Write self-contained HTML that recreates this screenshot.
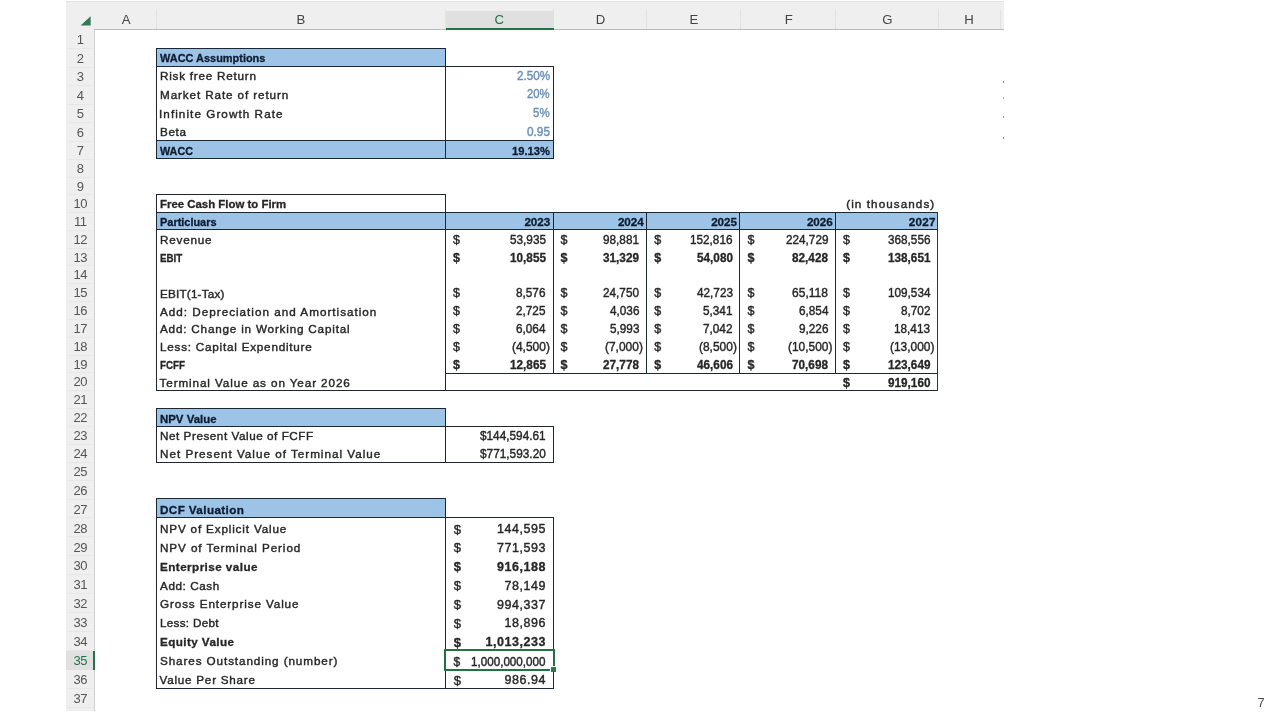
<!DOCTYPE html>
<html lang="en"><head><meta charset="utf-8"><title>DCF Valuation</title>
<style>
html,body{margin:0;padding:0;background:#fff}
body{width:1280px;height:720px;position:relative;overflow:hidden;font-family:"Liberation Sans",Arial,sans-serif}
.b{position:absolute}
.t{position:absolute;white-space:nowrap;line-height:1;color:#262626;transform-origin:0 0;-webkit-text-stroke:0.4px}
.n{-webkit-text-stroke:0}
#w{position:absolute;left:0;top:0;width:1280px;height:720px;will-change:transform}
.h{position:absolute;width:20px;text-align:center;font-size:13.2px;line-height:1;white-space:nowrap}
</style></head><body>
<div id="w">
<div class="b" style="left:66.00px;top:1.50px;width:938.00px;height:28.00px;background:#efefef;"></div>
<div class="b" style="left:66.00px;top:1.00px;width:938.00px;height:1.00px;background:#e2e2e2;"></div>
<div class="b" style="left:66.00px;top:29.50px;width:28.50px;height:681.50px;background:#efefef;"></div>
<div class="b" style="left:93.50px;top:30.00px;width:1.00px;height:681.00px;background:#d2d2d2;"></div>
<div class="b" style="left:94.00px;top:28.80px;width:910.00px;height:1.40px;background:#bdbdbd;"></div>
<div class="b" style="left:155.50px;top:9.00px;width:1.00px;height:20.00px;background:#e2e2e2;"></div>
<div class="b" style="left:445.00px;top:9.00px;width:1.00px;height:20.00px;background:#e2e2e2;"></div>
<div class="b" style="left:553.00px;top:9.00px;width:1.00px;height:20.00px;background:#e2e2e2;"></div>
<div class="b" style="left:646.00px;top:9.00px;width:1.00px;height:20.00px;background:#e2e2e2;"></div>
<div class="b" style="left:739.50px;top:9.00px;width:1.00px;height:20.00px;background:#e2e2e2;"></div>
<div class="b" style="left:834.80px;top:9.00px;width:1.00px;height:20.00px;background:#e2e2e2;"></div>
<div class="b" style="left:937.50px;top:9.00px;width:1.00px;height:20.00px;background:#e2e2e2;"></div>
<div class="b" style="left:1000.00px;top:9.00px;width:1.00px;height:20.00px;background:#e2e2e2;"></div>
<div class="b" style="left:67.00px;top:48.00px;width:26.50px;height:1.00px;background:#e7e7e7;"></div>
<div class="b" style="left:67.00px;top:66.50px;width:26.50px;height:1.00px;background:#e7e7e7;"></div>
<div class="b" style="left:67.00px;top:85.00px;width:26.50px;height:1.00px;background:#e7e7e7;"></div>
<div class="b" style="left:67.00px;top:103.50px;width:26.50px;height:1.00px;background:#e7e7e7;"></div>
<div class="b" style="left:67.00px;top:122.00px;width:26.50px;height:1.00px;background:#e7e7e7;"></div>
<div class="b" style="left:67.00px;top:140.50px;width:26.50px;height:1.00px;background:#e7e7e7;"></div>
<div class="b" style="left:67.00px;top:159.00px;width:26.50px;height:1.00px;background:#e7e7e7;"></div>
<div class="b" style="left:67.00px;top:176.50px;width:26.50px;height:1.00px;background:#e7e7e7;"></div>
<div class="b" style="left:67.00px;top:194.00px;width:26.50px;height:1.00px;background:#e7e7e7;"></div>
<div class="b" style="left:67.00px;top:211.80px;width:26.50px;height:1.00px;background:#e7e7e7;"></div>
<div class="b" style="left:67.00px;top:229.60px;width:26.50px;height:1.00px;background:#e7e7e7;"></div>
<div class="b" style="left:67.00px;top:247.50px;width:26.50px;height:1.00px;background:#e7e7e7;"></div>
<div class="b" style="left:67.00px;top:265.30px;width:26.50px;height:1.00px;background:#e7e7e7;"></div>
<div class="b" style="left:67.00px;top:283.10px;width:26.50px;height:1.00px;background:#e7e7e7;"></div>
<div class="b" style="left:67.00px;top:301.00px;width:26.50px;height:1.00px;background:#e7e7e7;"></div>
<div class="b" style="left:67.00px;top:318.80px;width:26.50px;height:1.00px;background:#e7e7e7;"></div>
<div class="b" style="left:67.00px;top:336.60px;width:26.50px;height:1.00px;background:#e7e7e7;"></div>
<div class="b" style="left:67.00px;top:354.50px;width:26.50px;height:1.00px;background:#e7e7e7;"></div>
<div class="b" style="left:67.00px;top:372.30px;width:26.50px;height:1.00px;background:#e7e7e7;"></div>
<div class="b" style="left:67.00px;top:390.10px;width:26.50px;height:1.00px;background:#e7e7e7;"></div>
<div class="b" style="left:67.00px;top:408.00px;width:26.50px;height:1.00px;background:#e7e7e7;"></div>
<div class="b" style="left:67.00px;top:425.80px;width:26.50px;height:1.00px;background:#e7e7e7;"></div>
<div class="b" style="left:67.00px;top:443.60px;width:26.50px;height:1.00px;background:#e7e7e7;"></div>
<div class="b" style="left:67.00px;top:461.50px;width:26.50px;height:1.00px;background:#e7e7e7;"></div>
<div class="b" style="left:67.00px;top:479.50px;width:26.50px;height:1.00px;background:#e7e7e7;"></div>
<div class="b" style="left:67.00px;top:498.50px;width:26.50px;height:1.00px;background:#e7e7e7;"></div>
<div class="b" style="left:67.00px;top:517.40px;width:26.50px;height:1.00px;background:#e7e7e7;"></div>
<div class="b" style="left:67.00px;top:536.30px;width:26.50px;height:1.00px;background:#e7e7e7;"></div>
<div class="b" style="left:67.00px;top:555.20px;width:26.50px;height:1.00px;background:#e7e7e7;"></div>
<div class="b" style="left:67.00px;top:574.10px;width:26.50px;height:1.00px;background:#e7e7e7;"></div>
<div class="b" style="left:67.00px;top:593.00px;width:26.50px;height:1.00px;background:#e7e7e7;"></div>
<div class="b" style="left:67.00px;top:611.90px;width:26.50px;height:1.00px;background:#e7e7e7;"></div>
<div class="b" style="left:67.00px;top:630.80px;width:26.50px;height:1.00px;background:#e7e7e7;"></div>
<div class="b" style="left:67.00px;top:649.70px;width:26.50px;height:1.00px;background:#e7e7e7;"></div>
<div class="b" style="left:67.00px;top:668.60px;width:26.50px;height:1.00px;background:#e7e7e7;"></div>
<div class="b" style="left:67.00px;top:687.50px;width:26.50px;height:1.00px;background:#e7e7e7;"></div>
<div class="b" style="left:67.00px;top:706.50px;width:26.50px;height:1.00px;background:#e7e7e7;"></div>
<div class="b" style="left:445.50px;top:11.00px;width:108.00px;height:18.50px;background:#e0e0e0;"></div>
<div class="b" style="left:445.50px;top:27.60px;width:108.00px;height:2.20px;background:#217346;"></div>
<div class="b" style="left:66.00px;top:650.60px;width:28.50px;height:19.20px;background:#e0e0e0;"></div>
<div class="b" style="left:92.70px;top:650.60px;width:2.10px;height:19.20px;background:#217346;"></div>
<svg class="b" style="left:80px;top:15px" width="12" height="12" viewBox="0 0 12 12"><path d="M10.6 1.2V10.6H0.6Z" fill="#2f7d50"/></svg>
<div class="b" style="left:157.00px;top:48.50px;width:288.60px;height:18.50px;background:#9dc3e6;"></div>
<div class="b" style="left:157.00px;top:141.00px;width:396.50px;height:17.70px;background:#9dc3e6;"></div>
<div class="b" style="left:155.70px;top:47.70px;width:290.60px;height:1.60px;background:#1d2733;"></div>
<div class="b" style="left:155.70px;top:65.70px;width:398.60px;height:1.60px;background:#1d2733;"></div>
<div class="b" style="left:155.70px;top:139.70px;width:398.60px;height:1.60px;background:#1d2733;"></div>
<div class="b" style="left:155.70px;top:157.70px;width:398.60px;height:1.60px;background:#1d2733;"></div>
<div class="b" style="left:155.70px;top:47.70px;width:1.60px;height:111.60px;background:#1d2733;"></div>
<div class="b" style="left:444.70px;top:47.70px;width:1.60px;height:111.60px;background:#1d2733;"></div>
<div class="b" style="left:552.70px;top:65.70px;width:1.60px;height:93.60px;background:#1d2733;"></div>
<div class="b" style="left:157.00px;top:212.30px;width:780.60px;height:17.80px;background:#9dc3e6;"></div>
<div class="b" style="left:155.70px;top:193.70px;width:290.60px;height:1.60px;background:#1d2733;"></div>
<div class="b" style="left:155.70px;top:211.70px;width:782.60px;height:1.60px;background:#1d2733;"></div>
<div class="b" style="left:155.70px;top:228.70px;width:782.60px;height:1.60px;background:#1d2733;"></div>
<div class="b" style="left:444.90px;top:372.90px;width:493.20px;height:1.20px;background:#1d2733;"></div>
<div class="b" style="left:155.70px;top:389.70px;width:782.60px;height:1.60px;background:#1d2733;"></div>
<div class="b" style="left:155.70px;top:193.70px;width:1.60px;height:197.60px;background:#1d2733;"></div>
<div class="b" style="left:444.70px;top:193.70px;width:1.60px;height:197.60px;background:#1d2733;"></div>
<div class="b" style="left:552.70px;top:211.70px;width:1.60px;height:161.60px;background:#1d2733;"></div>
<div class="b" style="left:645.70px;top:211.70px;width:1.60px;height:161.60px;background:#1d2733;"></div>
<div class="b" style="left:738.70px;top:211.70px;width:1.60px;height:161.60px;background:#1d2733;"></div>
<div class="b" style="left:834.70px;top:211.70px;width:1.60px;height:161.60px;background:#1d2733;"></div>
<div class="b" style="left:936.75px;top:211.75px;width:1.50px;height:179.50px;background:#22354d;"></div>
<div class="b" style="left:157.00px;top:408.50px;width:288.60px;height:17.80px;background:#9dc3e6;"></div>
<div class="b" style="left:155.70px;top:407.70px;width:290.60px;height:1.60px;background:#1d2733;"></div>
<div class="b" style="left:155.70px;top:425.70px;width:398.60px;height:1.60px;background:#1d2733;"></div>
<div class="b" style="left:155.70px;top:461.70px;width:398.60px;height:1.60px;background:#1d2733;"></div>
<div class="b" style="left:155.70px;top:407.70px;width:1.60px;height:55.60px;background:#1d2733;"></div>
<div class="b" style="left:444.70px;top:407.70px;width:1.60px;height:55.60px;background:#1d2733;"></div>
<div class="b" style="left:552.90px;top:425.90px;width:1.20px;height:37.20px;background:#1d2733;"></div>
<div class="b" style="left:157.00px;top:499.00px;width:288.60px;height:18.90px;background:#9dc3e6;"></div>
<div class="b" style="left:155.70px;top:497.70px;width:290.60px;height:1.60px;background:#1d2733;"></div>
<div class="b" style="left:155.70px;top:516.70px;width:398.60px;height:1.60px;background:#1d2733;"></div>
<div class="b" style="left:155.70px;top:687.70px;width:398.60px;height:1.60px;background:#1d2733;"></div>
<div class="b" style="left:155.70px;top:497.70px;width:1.60px;height:191.60px;background:#1d2733;"></div>
<div class="b" style="left:444.70px;top:497.70px;width:1.60px;height:191.60px;background:#1d2733;"></div>
<div class="b" style="left:552.90px;top:516.90px;width:1.20px;height:172.20px;background:#1d2733;"></div>
<div class="b" style="left:444.30px;top:649.30px;width:110.40px;height:21.70px;background:#fff;"></div>
<div class="b" style="left:444.30px;top:649.30px;width:110.40px;height:1.80px;background:#217346;"></div>
<div class="b" style="left:444.30px;top:669.20px;width:110.40px;height:1.80px;background:#217346;"></div>
<div class="b" style="left:444.30px;top:649.30px;width:1.80px;height:21.70px;background:#217346;"></div>
<div class="b" style="left:552.90px;top:649.30px;width:1.80px;height:21.70px;background:#217346;"></div>
<div class="b" style="left:550.40px;top:666.20px;width:5.60px;height:5.80px;background:#fff;"></div>
<div class="b" style="left:551.40px;top:667.20px;width:4.60px;height:4.80px;background:#2a7a4c;"></div>
<div class="b" style="left:1002.80px;top:81.40px;width:1.00px;height:1.30px;background:#8a8a8a;"></div>
<div class="b" style="left:1002.80px;top:97.40px;width:1.00px;height:1.30px;background:#c2b65a;"></div>
<div class="b" style="left:1002.80px;top:116.40px;width:1.00px;height:1.30px;background:#999;"></div>
<div class="b" style="left:1002.80px;top:137.40px;width:1.00px;height:1.30px;background:#8a8a8a;"></div>
<span class="h" style="left:116.20px;top:13.43px;color:#444">A</span>
<span class="h" style="left:290.80px;top:13.43px;color:#444">B</span>
<span class="h" style="left:489.30px;top:13.43px;color:#217346">C</span>
<span class="h" style="left:590.60px;top:13.43px;color:#444">D</span>
<span class="h" style="left:684.00px;top:13.43px;color:#444">E</span>
<span class="h" style="left:778.70px;top:13.43px;color:#444">F</span>
<span class="h" style="left:877.50px;top:13.43px;color:#444">G</span>
<span class="h" style="left:959.00px;top:13.43px;color:#444">H</span>
<span class="h" style="left:70.40px;top:33.00px;font-size:13px;color:#555">1</span>
<span class="h" style="left:70.40px;top:51.50px;font-size:13px;color:#555">2</span>
<span class="h" style="left:70.40px;top:70.00px;font-size:13px;color:#555">3</span>
<span class="h" style="left:70.40px;top:88.50px;font-size:13px;color:#555">4</span>
<span class="h" style="left:70.40px;top:107.00px;font-size:13px;color:#555">5</span>
<span class="h" style="left:70.40px;top:125.50px;font-size:13px;color:#555">6</span>
<span class="h" style="left:70.40px;top:144.00px;font-size:13px;color:#555">7</span>
<span class="h" style="left:70.40px;top:162.00px;font-size:13px;color:#555">8</span>
<span class="h" style="left:70.40px;top:179.50px;font-size:13px;color:#555">9</span>
<span class="h" style="left:70.30px;top:197.15px;font-size:13px;letter-spacing:-0.5px;color:#555">10</span>
<span class="h" style="left:70.30px;top:214.95px;font-size:13px;letter-spacing:-0.5px;color:#555">11</span>
<span class="h" style="left:70.30px;top:232.80px;font-size:13px;letter-spacing:-0.5px;color:#555">12</span>
<span class="h" style="left:70.30px;top:250.65px;font-size:13px;letter-spacing:-0.5px;color:#555">13</span>
<span class="h" style="left:70.30px;top:268.45px;font-size:13px;letter-spacing:-0.5px;color:#555">14</span>
<span class="h" style="left:70.30px;top:286.30px;font-size:13px;letter-spacing:-0.5px;color:#555">15</span>
<span class="h" style="left:70.30px;top:304.15px;font-size:13px;letter-spacing:-0.5px;color:#555">16</span>
<span class="h" style="left:70.30px;top:321.95px;font-size:13px;letter-spacing:-0.5px;color:#555">17</span>
<span class="h" style="left:70.30px;top:339.80px;font-size:13px;letter-spacing:-0.5px;color:#555">18</span>
<span class="h" style="left:70.30px;top:357.65px;font-size:13px;letter-spacing:-0.5px;color:#555">19</span>
<span class="h" style="left:70.30px;top:375.45px;font-size:13px;letter-spacing:-0.5px;color:#555">20</span>
<span class="h" style="left:70.30px;top:393.30px;font-size:13px;letter-spacing:-0.5px;color:#555">21</span>
<span class="h" style="left:70.30px;top:411.15px;font-size:13px;letter-spacing:-0.5px;color:#555">22</span>
<span class="h" style="left:70.30px;top:428.95px;font-size:13px;letter-spacing:-0.5px;color:#555">23</span>
<span class="h" style="left:70.30px;top:446.80px;font-size:13px;letter-spacing:-0.5px;color:#555">24</span>
<span class="h" style="left:70.30px;top:464.75px;font-size:13px;letter-spacing:-0.5px;color:#555">25</span>
<span class="h" style="left:70.30px;top:483.75px;font-size:13px;letter-spacing:-0.5px;color:#555">26</span>
<span class="h" style="left:70.30px;top:502.70px;font-size:13px;letter-spacing:-0.5px;color:#555">27</span>
<span class="h" style="left:70.30px;top:521.60px;font-size:13px;letter-spacing:-0.5px;color:#555">28</span>
<span class="h" style="left:70.30px;top:540.50px;font-size:13px;letter-spacing:-0.5px;color:#555">29</span>
<span class="h" style="left:70.30px;top:559.40px;font-size:13px;letter-spacing:-0.5px;color:#555">30</span>
<span class="h" style="left:70.30px;top:578.30px;font-size:13px;letter-spacing:-0.5px;color:#555">31</span>
<span class="h" style="left:70.30px;top:597.20px;font-size:13px;letter-spacing:-0.5px;color:#555">32</span>
<span class="h" style="left:70.30px;top:616.10px;font-size:13px;letter-spacing:-0.5px;color:#555">33</span>
<span class="h" style="left:70.30px;top:635.00px;font-size:13px;letter-spacing:-0.5px;color:#555">34</span>
<span class="h" style="left:70.30px;top:654.30px;font-size:13px;letter-spacing:-0.5px;color:#217346">35</span>
<span class="h" style="left:70.30px;top:673.20px;font-size:13px;letter-spacing:-0.5px;color:#555">36</span>
<span class="h" style="left:70.30px;top:692.15px;font-size:13px;letter-spacing:-0.5px;color:#555">37</span>
<span class="t" style="left:159.50px;top:52.40px;font-size:11.7px;transform:scaleX(0.9363);font-weight:bold;-webkit-text-stroke:0.3px;color:#0e1b30;">WACC Assumptions</span>
<span class="t" style="left:160.00px;top:70.20px;font-size:11.7px;letter-spacing:0.771px;">Risk free Return</span>
<span class="t" style="left:160.00px;top:89.10px;font-size:11.7px;letter-spacing:0.891px;">Market Rate of return</span>
<span class="t" style="left:159.00px;top:107.80px;font-size:11.7px;letter-spacing:1.064px;">Infinite Growth Rate</span>
<span class="t" style="left:160.00px;top:126.30px;font-size:11.7px;letter-spacing:0.652px;">Beta</span>
<span class="t" style="left:159.50px;top:144.60px;font-size:11.7px;transform:scaleX(0.9237);font-weight:bold;-webkit-text-stroke:0.3px;color:#0e1b30;">WACC</span>
<span class="t" style="left:160.00px;top:198.30px;font-size:11.7px;transform:scaleX(0.9760);font-weight:bold;-webkit-text-stroke:0.3px;">Free Cash Flow to Firm</span>
<span class="t" style="left:160.00px;top:216.40px;font-size:11.7px;transform:scaleX(0.9357);font-weight:bold;-webkit-text-stroke:0.3px;color:#0e1b30;">Particluars</span>
<span class="t" style="left:160.00px;top:234.20px;font-size:11.7px;letter-spacing:0.786px;">Revenue</span>
<span class="t" style="left:160.00px;top:252.10px;font-size:11.7px;transform:scaleX(0.8369);font-weight:bold;-webkit-text-stroke:0.3px;">EBIT</span>
<span class="t" style="left:160.00px;top:287.70px;font-size:11.7px;letter-spacing:0.205px;">EBIT(1-Tax)</span>
<span class="t" style="left:160.00px;top:305.60px;font-size:11.7px;letter-spacing:1.004px;">Add: Depreciation and Amortisation</span>
<span class="t" style="left:160.00px;top:323.40px;font-size:11.7px;letter-spacing:0.810px;">Add: Change in Working Capital</span>
<span class="t" style="left:160.00px;top:341.20px;font-size:11.7px;letter-spacing:0.774px;">Less: Capital Expenditure</span>
<span class="t" style="left:160.00px;top:359.10px;font-size:11.7px;transform:scaleX(0.8412);font-weight:bold;-webkit-text-stroke:0.3px;">FCFF</span>
<span class="t" style="left:159.50px;top:376.90px;font-size:11.7px;letter-spacing:0.901px;">Terminal Value as on Year 2026</span>
<span class="t" style="left:160.00px;top:412.60px;font-size:11.7px;transform:scaleX(0.9775);font-weight:bold;-webkit-text-stroke:0.3px;color:#0e1b30;">NPV Value</span>
<span class="t" style="left:160.00px;top:430.40px;font-size:11.7px;letter-spacing:0.544px;">Net Present Value of FCFF</span>
<span class="t" style="left:160.00px;top:448.20px;font-size:11.7px;letter-spacing:0.995px;">Net Present Value of Terminal Value</span>
<span class="t" style="left:160.00px;top:503.90px;font-size:11.7px;letter-spacing:0.389px;font-weight:bold;-webkit-text-stroke:0.3px;color:#0e1b30;">DCF Valuation</span>
<span class="t" style="left:160.00px;top:522.80px;font-size:11.7px;letter-spacing:0.834px;">NPV of Explicit Value</span>
<span class="t" style="left:160.00px;top:541.70px;font-size:11.7px;letter-spacing:0.906px;">NPV of Terminal Period</span>
<span class="t" style="left:160.00px;top:560.60px;font-size:11.7px;letter-spacing:0.437px;font-weight:bold;-webkit-text-stroke:0.3px;">Enterprise value</span>
<span class="t" style="left:160.00px;top:579.50px;font-size:11.7px;letter-spacing:0.585px;">Add: Cash</span>
<span class="t" style="left:160.00px;top:598.40px;font-size:11.7px;letter-spacing:0.883px;">Gross Enterprise Value</span>
<span class="t" style="left:160.00px;top:617.30px;font-size:11.7px;letter-spacing:0.292px;">Less: Debt</span>
<span class="t" style="left:160.00px;top:636.20px;font-size:11.7px;letter-spacing:0.409px;font-weight:bold;-webkit-text-stroke:0.3px;">Equity Value</span>
<span class="t" style="left:160.00px;top:655.10px;font-size:11.7px;letter-spacing:0.901px;">Shares Outstanding (number)</span>
<span class="t" style="left:159.50px;top:674.00px;font-size:11.7px;letter-spacing:0.758px;">Value Per Share</span>
<span class="t" style="left:516.50px;top:69.52px;font-size:12.5px;transform:scaleX(0.9341);color:#6a8fb5;">2.50%</span>
<span class="t" style="left:527.00px;top:88.42px;font-size:12.5px;transform:scaleX(0.9035);color:#6a8fb5;">20%</span>
<span class="t" style="left:533.00px;top:107.12px;font-size:12.5px;transform:scaleX(0.9191);color:#6a8fb5;">5%</span>
<span class="t" style="left:526.50px;top:125.62px;font-size:12.5px;transform:scaleX(0.9435);color:#6a8fb5;">0.95</span>
<span class="t" style="left:511.50px;top:144.60px;font-size:11.7px;transform:scaleX(0.9566);font-weight:bold;-webkit-text-stroke:0.3px;color:#0e1b30;">19.13%</span>
<span class="t" style="left:524.45px;top:216.40px;font-size:11.7px;letter-spacing:-0.067px;font-weight:bold;-webkit-text-stroke:0.3px;color:#0e1b30;">2023</span>
<span class="t" style="left:509.75px;top:233.92px;font-size:12.5px;transform:scaleX(0.9404);">53,935</span>
<span class="t" style="left:453.00px;top:233.92px;font-size:12.5px;">$</span>
<span class="t" style="left:509.75px;top:251.82px;font-size:12.5px;transform:scaleX(0.9404);font-weight:bold;-webkit-text-stroke:0.3px;">10,855</span>
<span class="t" style="left:453.00px;top:251.82px;font-size:12.5px;font-weight:bold;-webkit-text-stroke:0.3px;">$</span>
<span class="t" style="left:516.25px;top:287.42px;font-size:12.5px;transform:scaleX(0.9416);">8,576</span>
<span class="t" style="left:453.00px;top:287.42px;font-size:12.5px;">$</span>
<span class="t" style="left:516.25px;top:305.32px;font-size:12.5px;transform:scaleX(0.9416);">2,725</span>
<span class="t" style="left:453.00px;top:305.32px;font-size:12.5px;">$</span>
<span class="t" style="left:516.25px;top:323.12px;font-size:12.5px;transform:scaleX(0.9416);">6,064</span>
<span class="t" style="left:453.00px;top:323.12px;font-size:12.5px;">$</span>
<span class="t" style="left:511.95px;top:340.92px;font-size:12.5px;transform:scaleX(0.9558);">(4,500)</span>
<span class="t" style="left:453.00px;top:340.92px;font-size:12.5px;">$</span>
<span class="t" style="left:509.75px;top:358.82px;font-size:12.5px;transform:scaleX(0.9404);font-weight:bold;-webkit-text-stroke:0.3px;">12,865</span>
<span class="t" style="left:453.00px;top:358.82px;font-size:12.5px;font-weight:bold;-webkit-text-stroke:0.3px;">$</span>
<span class="t" style="left:617.95px;top:216.40px;font-size:11.7px;letter-spacing:-0.067px;font-weight:bold;-webkit-text-stroke:0.3px;color:#0e1b30;">2024</span>
<span class="t" style="left:603.25px;top:233.92px;font-size:12.5px;transform:scaleX(0.9404);">98,881</span>
<span class="t" style="left:560.50px;top:233.92px;font-size:12.5px;">$</span>
<span class="t" style="left:603.25px;top:251.82px;font-size:12.5px;transform:scaleX(0.9404);font-weight:bold;-webkit-text-stroke:0.3px;">31,329</span>
<span class="t" style="left:560.50px;top:251.82px;font-size:12.5px;font-weight:bold;-webkit-text-stroke:0.3px;">$</span>
<span class="t" style="left:603.25px;top:287.42px;font-size:12.5px;transform:scaleX(0.9404);">24,750</span>
<span class="t" style="left:560.50px;top:287.42px;font-size:12.5px;">$</span>
<span class="t" style="left:609.75px;top:305.32px;font-size:12.5px;transform:scaleX(0.9416);">4,036</span>
<span class="t" style="left:560.50px;top:305.32px;font-size:12.5px;">$</span>
<span class="t" style="left:609.75px;top:323.12px;font-size:12.5px;transform:scaleX(0.9416);">5,993</span>
<span class="t" style="left:560.50px;top:323.12px;font-size:12.5px;">$</span>
<span class="t" style="left:605.45px;top:340.92px;font-size:12.5px;transform:scaleX(0.9558);">(7,000)</span>
<span class="t" style="left:560.50px;top:340.92px;font-size:12.5px;">$</span>
<span class="t" style="left:603.25px;top:358.82px;font-size:12.5px;transform:scaleX(0.9404);font-weight:bold;-webkit-text-stroke:0.3px;">27,778</span>
<span class="t" style="left:560.50px;top:358.82px;font-size:12.5px;font-weight:bold;-webkit-text-stroke:0.3px;">$</span>
<span class="t" style="left:711.20px;top:216.40px;font-size:11.7px;letter-spacing:-0.067px;font-weight:bold;-webkit-text-stroke:0.3px;color:#0e1b30;">2025</span>
<span class="t" style="left:690.00px;top:233.92px;font-size:12.5px;transform:scaleX(0.9396);">152,816</span>
<span class="t" style="left:654.25px;top:233.92px;font-size:12.5px;">$</span>
<span class="t" style="left:696.50px;top:251.82px;font-size:12.5px;transform:scaleX(0.9404);font-weight:bold;-webkit-text-stroke:0.3px;">54,080</span>
<span class="t" style="left:654.25px;top:251.82px;font-size:12.5px;font-weight:bold;-webkit-text-stroke:0.3px;">$</span>
<span class="t" style="left:696.50px;top:287.42px;font-size:12.5px;transform:scaleX(0.9404);">42,723</span>
<span class="t" style="left:654.25px;top:287.42px;font-size:12.5px;">$</span>
<span class="t" style="left:703.00px;top:305.32px;font-size:12.5px;transform:scaleX(0.9416);">5,341</span>
<span class="t" style="left:654.25px;top:305.32px;font-size:12.5px;">$</span>
<span class="t" style="left:703.00px;top:323.12px;font-size:12.5px;transform:scaleX(0.9416);">7,042</span>
<span class="t" style="left:654.25px;top:323.12px;font-size:12.5px;">$</span>
<span class="t" style="left:698.70px;top:340.92px;font-size:12.5px;transform:scaleX(0.9558);">(8,500)</span>
<span class="t" style="left:654.25px;top:340.92px;font-size:12.5px;">$</span>
<span class="t" style="left:696.50px;top:358.82px;font-size:12.5px;transform:scaleX(0.9404);font-weight:bold;-webkit-text-stroke:0.3px;">46,606</span>
<span class="t" style="left:654.25px;top:358.82px;font-size:12.5px;font-weight:bold;-webkit-text-stroke:0.3px;">$</span>
<span class="t" style="left:806.95px;top:216.40px;font-size:11.7px;letter-spacing:-0.067px;font-weight:bold;-webkit-text-stroke:0.3px;color:#0e1b30;">2026</span>
<span class="t" style="left:785.75px;top:233.92px;font-size:12.5px;transform:scaleX(0.9396);">224,729</span>
<span class="t" style="left:747.50px;top:233.92px;font-size:12.5px;">$</span>
<span class="t" style="left:792.25px;top:251.82px;font-size:12.5px;transform:scaleX(0.9404);font-weight:bold;-webkit-text-stroke:0.3px;">82,428</span>
<span class="t" style="left:747.50px;top:251.82px;font-size:12.5px;font-weight:bold;-webkit-text-stroke:0.3px;">$</span>
<span class="t" style="left:792.25px;top:287.42px;font-size:12.5px;transform:scaleX(0.9638);">65,118</span>
<span class="t" style="left:747.50px;top:287.42px;font-size:12.5px;">$</span>
<span class="t" style="left:798.75px;top:305.32px;font-size:12.5px;transform:scaleX(0.9416);">6,854</span>
<span class="t" style="left:747.50px;top:305.32px;font-size:12.5px;">$</span>
<span class="t" style="left:798.75px;top:323.12px;font-size:12.5px;transform:scaleX(0.9416);">9,226</span>
<span class="t" style="left:747.50px;top:323.12px;font-size:12.5px;">$</span>
<span class="t" style="left:787.95px;top:340.92px;font-size:12.5px;transform:scaleX(0.9527);">(10,500)</span>
<span class="t" style="left:747.50px;top:340.92px;font-size:12.5px;">$</span>
<span class="t" style="left:792.25px;top:358.82px;font-size:12.5px;transform:scaleX(0.9404);font-weight:bold;-webkit-text-stroke:0.3px;">70,698</span>
<span class="t" style="left:747.50px;top:358.82px;font-size:12.5px;font-weight:bold;-webkit-text-stroke:0.3px;">$</span>
<span class="t" style="left:908.70px;top:216.40px;font-size:11.7px;letter-spacing:0.267px;font-weight:bold;-webkit-text-stroke:0.3px;color:#0e1b30;">2027</span>
<span class="t" style="left:887.50px;top:233.92px;font-size:12.5px;transform:scaleX(0.9396);">368,556</span>
<span class="t" style="left:843.00px;top:233.92px;font-size:12.5px;">$</span>
<span class="t" style="left:887.50px;top:251.82px;font-size:12.5px;transform:scaleX(0.9396);font-weight:bold;-webkit-text-stroke:0.3px;">138,651</span>
<span class="t" style="left:843.00px;top:251.82px;font-size:12.5px;font-weight:bold;-webkit-text-stroke:0.3px;">$</span>
<span class="t" style="left:887.50px;top:287.42px;font-size:12.5px;transform:scaleX(0.9396);">109,534</span>
<span class="t" style="left:843.00px;top:287.42px;font-size:12.5px;">$</span>
<span class="t" style="left:900.50px;top:305.32px;font-size:12.5px;transform:scaleX(0.9416);">8,702</span>
<span class="t" style="left:843.00px;top:305.32px;font-size:12.5px;">$</span>
<span class="t" style="left:894.00px;top:323.12px;font-size:12.5px;transform:scaleX(0.9404);">18,413</span>
<span class="t" style="left:843.00px;top:323.12px;font-size:12.5px;">$</span>
<span class="t" style="left:889.70px;top:340.92px;font-size:12.5px;transform:scaleX(0.9527);">(13,000)</span>
<span class="t" style="left:843.00px;top:340.92px;font-size:12.5px;">$</span>
<span class="t" style="left:887.50px;top:358.82px;font-size:12.5px;transform:scaleX(0.9396);font-weight:bold;-webkit-text-stroke:0.3px;">123,649</span>
<span class="t" style="left:843.00px;top:358.82px;font-size:12.5px;font-weight:bold;-webkit-text-stroke:0.3px;">$</span>
<span class="t" style="left:843.00px;top:376.62px;font-size:12.5px;font-weight:bold;-webkit-text-stroke:0.3px;">$</span>
<span class="t" style="left:887.50px;top:376.62px;font-size:12.5px;transform:scaleX(0.9396);font-weight:bold;-webkit-text-stroke:0.3px;">919,160</span>
<span class="t" style="left:846.25px;top:198.30px;font-size:11.7px;letter-spacing:1.068px;">(in thousands)</span>
<span class="t" style="left:479.75px;top:430.22px;font-size:12.5px;transform:scaleX(0.9438);">$144,594.61</span>
<span class="t" style="left:479.75px;top:448.02px;font-size:12.5px;transform:scaleX(0.9467);">$771,593.20</span>
<span class="t" style="left:497.00px;top:522.92px;font-size:12.5px;letter-spacing:0.528px;">144,595</span>
<span class="t" style="left:453.80px;top:522.50px;font-size:13px;">$</span>
<span class="t" style="left:497.00px;top:541.82px;font-size:12.5px;letter-spacing:0.528px;">771,593</span>
<span class="t" style="left:453.80px;top:541.40px;font-size:13px;">$</span>
<span class="t" style="left:497.00px;top:560.72px;font-size:12.5px;letter-spacing:0.528px;font-weight:bold;-webkit-text-stroke:0.3px;">916,188</span>
<span class="t" style="left:453.80px;top:560.30px;font-size:13px;font-weight:bold;-webkit-text-stroke:0.3px;">$</span>
<span class="t" style="left:504.50px;top:579.62px;font-size:12.5px;letter-spacing:0.524px;">78,149</span>
<span class="t" style="left:453.80px;top:579.20px;font-size:13px;">$</span>
<span class="t" style="left:497.00px;top:598.52px;font-size:12.5px;letter-spacing:0.528px;">994,337</span>
<span class="t" style="left:453.80px;top:598.10px;font-size:13px;">$</span>
<span class="t" style="left:504.50px;top:617.42px;font-size:12.5px;letter-spacing:0.524px;">18,896</span>
<span class="t" style="left:453.80px;top:617.00px;font-size:13px;">$</span>
<span class="t" style="left:485.60px;top:636.32px;font-size:12.5px;letter-spacing:0.518px;font-weight:bold;-webkit-text-stroke:0.3px;">1,013,233</span>
<span class="t" style="left:453.80px;top:635.90px;font-size:13px;font-weight:bold;-webkit-text-stroke:0.3px;">$</span>
<span class="t" style="left:504.50px;top:674.12px;font-size:12.5px;letter-spacing:0.524px;">986.94</span>
<span class="t" style="left:453.80px;top:673.70px;font-size:13px;">$</span>
<span class="t" style="left:453.50px;top:656.04px;font-size:12px;">$</span>
<span class="t" style="left:470.60px;top:656.04px;font-size:12px;transform:scaleX(0.9706);">1,000,000,000</span>
<span class="t n" style="left:1257.60px;top:697.06px;font-size:12.8px;color:#4a4a4a;">7</span>
</div>
</body></html>
